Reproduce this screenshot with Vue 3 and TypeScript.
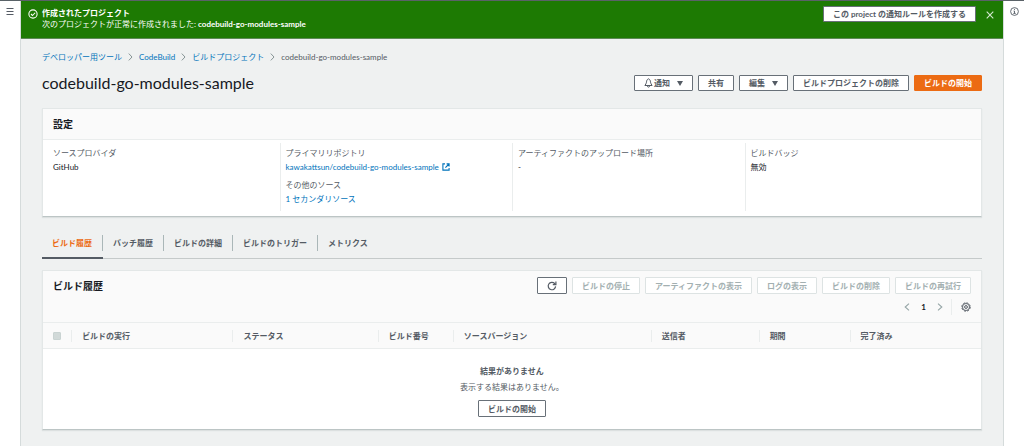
<script setup lang="ts">
import { ref } from 'vue'

interface Column {
  key: string
  label: string
}

const projectName = 'codebuild-go-modules-sample'
const bannerOpen = ref(true)
const activeTab = ref(0)

const crumbs: string[] = ['デベロッパー用ツール', 'CodeBuild', 'ビルドプロジェクト']
const tabs: string[] = ['ビルド履歴', 'バッチ履歴', 'ビルドの詳細', 'ビルドのトリガー', 'メトリクス']
const buildActions: string[] = [
  'ビルドの停止',
  'アーティファクトの表示',
  'ログの表示',
  'ビルドの削除',
  'ビルドの再試行',
]
const columns: Column[] = [
  { key: 'run', label: 'ビルドの実行' },
  { key: 'status', label: 'ステータス' },
  { key: 'number', label: 'ビルド番号' },
  { key: 'source', label: 'ソースバージョン' },
  { key: 'sender', label: '送信者' },
  { key: 'duration', label: '期間' },
  { key: 'done', label: '完了済み' },
]
</script>

<template>
  <div class="shell">
    <aside class="rail">
      <button class="icon-btn" type="button" aria-label="メニュー">
        <svg width="8" height="8" viewBox="0 0 8 8" stroke="#545b64" stroke-width="1">
          <path d="M0.5 1.5h7M0.5 4.5h7M0.5 7.5h7" />
        </svg>
      </button>
    </aside>

    <main class="main">
      <section v-if="bannerOpen" class="banner">
        <svg class="banner-icon" width="10" height="10" viewBox="0 0 16 16" fill="none" stroke="#fff" stroke-width="1.7">
          <circle cx="8" cy="8" r="6.6" />
          <path d="M4.8 8l2.4 2.4 4.2-4.4" />
        </svg>
        <div class="banner-text">
          <strong>作成されたプロジェクト</strong>
          <span>次のプロジェクトが正常に作成されました: <span class="semi">{{ projectName }}</span></span>
        </div>
        <button class="btn banner-btn" type="button">この project の通知ルールを作成する</button>
        <button class="icon-btn" type="button" aria-label="閉じる" @click="bannerOpen = false">
          <svg width="8" height="8" viewBox="0 0 8 8" stroke="#d5e8d0" stroke-width="1.1">
            <path d="M0.7 0.7l6.6 6.6M7.3 0.7l-6.6 6.6" />
          </svg>
        </button>
      </section>

      <div class="content">
        <nav class="crumbs">
          <template v-for="crumb in crumbs" :key="crumb">
            <a href="#">{{ crumb }}</a>
            <svg width="5" height="8" viewBox="0 0 5 8" fill="none" stroke="#879596" stroke-width="1">
              <path d="M0.8 0.6l3.2 3.4-3.2 3.4" />
            </svg>
          </template>
          <span>{{ projectName }}</span>
        </nav>

        <header class="title-row">
          <h1>{{ projectName }}</h1>
          <div class="actions">
            <button class="btn" type="button">
              <svg class="bell" width="9" height="10" viewBox="0 0 9 10" fill="none" stroke="#545b64" stroke-width="1">
                <path d="M4.5 0.8C2.9 1.5 2.6 2.7 2.5 4.2 2.4 5.5 1.6 6.2 0.9 7.5h7.2C7.4 6.2 6.6 5.5 6.5 4.2 6.4 2.7 6.1 1.5 4.5 0.8z" />
                <path d="M3.3 7.7c0.1 1.9 2.3 1.9 2.4 0" />
              </svg>
              <span>通知</span>
              <svg class="caret" width="6" height="5" viewBox="0 0 6 5" fill="#545b64"><path d="M0 0h6L3 5z" /></svg>
            </button>
            <button class="btn" type="button">共有</button>
            <button class="btn" type="button">
              <span>編集</span>
              <svg class="caret" width="6" height="5" viewBox="0 0 6 5" fill="#545b64"><path d="M0 0h6L3 5z" /></svg>
            </button>
            <button class="btn" type="button">ビルドプロジェクトの削除</button>
            <button class="btn primary" type="button">ビルドの開始</button>
          </div>
        </header>

        <section class="card">
          <h2 class="card-title">設定</h2>
          <div class="settings">
            <dl>
              <dt>ソースプロバイダ</dt>
              <dd>GitHub</dd>
            </dl>
            <dl>
              <dt>プライマリリポジトリ</dt>
              <dd>
                <a href="#">kawakattsun/codebuild-go-modules-sample
                  <svg class="external" width="8" height="8" viewBox="0 0 8 8" fill="none" stroke="#0073bb" stroke-width="1.1">
                    <path d="M3 0.9H0.9v6.2h6.2V5M4.6 0.9h2.5v2.5M7 1L3.4 4.6" />
                  </svg></a>
              </dd>
              <dt>その他のソース</dt>
              <dd><a href="#">1 セカンダリソース</a></dd>
            </dl>
            <dl>
              <dt>アーティファクトのアップロード場所</dt>
              <dd>-</dd>
            </dl>
            <dl>
              <dt>ビルドバッジ</dt>
              <dd>無効</dd>
            </dl>
          </div>
        </section>

        <div class="tabs" role="tablist">
          <button
            v-for="(tab, i) in tabs"
            :key="tab"
            type="button"
            role="tab"
            class="tab"
            :class="{ active: activeTab === i }"
            :aria-selected="activeTab === i"
            @click="activeTab = i"
          >
            <span>{{ tab }}</span>
          </button>
        </div>

        <section class="card">
          <div class="history-head">
            <div class="history-top">
              <h2>ビルド履歴</h2>
              <div class="actions">
                <button class="btn tall" type="button" aria-label="更新">
                  <svg width="10" height="10" viewBox="0 0 10 10" fill="none" stroke="#545b64" stroke-width="1.2">
                    <path d="M8.6 5.4A3.7 3.7 0 1 1 7.6 2.5L8.8 3.6" />
                    <path d="M8.9 0.6v3.1H5.8" />
                  </svg>
                </button>
                <button v-for="action in buildActions" :key="action" class="btn tall" type="button" disabled>
                  {{ action }}
                </button>
              </div>
            </div>
            <div class="tools">
              <div class="pager">
                <button class="icon-btn" type="button" aria-label="前へ">
                  <svg width="6" height="8" viewBox="0 0 6 8" fill="none" stroke="#95a5a6" stroke-width="1.1"><path d="M5 0.6L1.2 4 5 7.4" /></svg>
                </button>
                <strong>1</strong>
                <button class="icon-btn" type="button" aria-label="次へ">
                  <svg width="6" height="8" viewBox="0 0 6 8" fill="none" stroke="#95a5a6" stroke-width="1.1"><path d="M1 0.6L4.8 4 1 7.4" /></svg>
                </button>
              </div>
              <button class="icon-btn gear" type="button" aria-label="設定">
                <svg width="10" height="10" viewBox="0 0 10 10" fill="none" stroke="#545b64">
                  <circle cx="5" cy="5" r="4.2" stroke-width="1" stroke-dasharray="2 1.3" />
                  <circle cx="5" cy="5" r="3.5" stroke-width="0.9" />
                  <circle cx="5" cy="5" r="1.4" stroke-width="1" />
                </svg>
              </button>
            </div>
          </div>
          <table>
            <colgroup>
              <col class="c-check" />
              <col v-for="col in columns" :key="col.key" :class="'c-' + col.key" />
            </colgroup>
            <thead>
              <tr>
                <th><input type="checkbox" aria-label="すべて選択" disabled /></th>
                <th v-for="col in columns" :key="col.key"><span>{{ col.label }}</span></th>
              </tr>
            </thead>
            <tbody>
              <tr>
                <td colspan="8">
                  <div class="empty">
                    <strong>結果がありません</strong>
                    <span>表示する結果はありません。</span>
                    <button class="btn tall" type="button">ビルドの開始</button>
                  </div>
                </td>
              </tr>
            </tbody>
          </table>
        </section>
      </div>
    </main>

    <aside class="rail">
      <button class="icon-btn" type="button" aria-label="情報">
        <svg width="9" height="9" viewBox="0 0 9 9" fill="none" stroke="#545b64" stroke-width="0.9">
          <circle cx="4.5" cy="4.5" r="3.9" />
          <path d="M4.5 1.9v1M3.6 4h0.9v2.4M3.3 6.4h2.4" />
        </svg>
      </button>
    </aside>
  </div>
</template>

<style>
body {
  background: #fff;
}
</style>

<style scoped>
.shell {
  display: flex;
  min-height: 100vh;
  box-sizing: border-box;
  border-top: 1px solid #5a6268;
  font-family: Lato, "Liberation Sans", "Noto Sans CJK JP", sans-serif;
  font-size: 8px;
  line-height: 12px;
  color: #16191f;
}
.shell * {
  box-sizing: border-box;
}
button {
  font: inherit;
  cursor: pointer;
}
a {
  color: #0073bb;
  text-decoration: none;
}
h1,
h2,
dl,
dd {
  margin: 0;
}
.rail {
  display: flex;
  flex-shrink: 0;
  justify-content: center;
  align-items: flex-start;
  width: 20px;
  padding-top: 6px;
  background: #fff;
}
.icon-btn {
  display: flex;
  flex-shrink: 0;
  padding: 0;
  border: 0;
  background: none;
}
.main {
  flex: 1;
  min-width: 0;
  background: #eff1f1;
  border-left: 1px solid #d5dbdb;
  border-right: 1px solid #d5dbdb;
}
.banner {
  display: flex;
  align-items: flex-start;
  min-height: 38px;
  padding: 5px 9px 7px 7px;
  background: #1d7a03;
  border-bottom: 1px solid #5d8a56;
  color: #fff;
}
.banner > .icon-btn {
  margin: 5px 0 0 10px;
}
.banner-icon {
  margin: 3px 4px 0 0;
}
.banner-text {
  display: flex;
  flex: 1;
  flex-direction: column;
  line-height: 11px;
  padding-top: 2px;
}
.semi {
  font-weight: 700;
}
.content {
  padding: 12px 21px 16px;
}
.crumbs {
  display: flex;
  align-items: center;
  gap: 6px;
  color: #545b64;
}
.title-row {
  display: flex;
  align-items: center;
  justify-content: space-between;
  margin-top: 9px;
}
h1 {
  font-size: 16px;
  line-height: 22px;
  font-weight: 400;
}
.actions {
  display: flex;
  gap: 5px;
}
.btn {
  display: inline-flex;
  align-items: center;
  justify-content: center;
  height: 16px;
  padding: 0 9px;
  border: 1px solid #687078;
  border-radius: 1px;
  background: #fff;
  color: #545b64;
  font-weight: 700;
  line-height: 12px;
  white-space: nowrap;
}
.btn .bell {
  margin-right: 1px;
}
.btn .caret {
  margin-left: 7px;
}
.btn.tall {
  height: 17px;
}
.btn.primary {
  border-color: #ec6b13;
  background: #ec6b13;
  color: #fff;
}
.btn:disabled {
  border-color: #dde3e3;
  color: #a3b0b1;
  cursor: default;
}
.card {
  border: 1px solid #e3e7e7;
  border-bottom-color: #bcc5c5;
  background: #fff;
  box-shadow: 0 1px 1px #dce0e0;
}
.title-row + .card {
  margin-top: 14px;
}
h2 {
  font-size: 10px;
  line-height: 14px;
  font-weight: 700;
}
.card-title {
  padding: 8px 10px;
  background: #fafafa;
  border-bottom: 1px solid #eaeded;
}
.settings {
  display: grid;
  grid-template-columns: repeat(4, 1fr);
  padding: 3px 4px 5px;
}
dl {
  padding: 4px 0 5px 6px;
}
dl + dl {
  padding-left: 5px;
  border-left: 1px solid #eaeded;
}
dt {
  color: #545b64;
  line-height: 13px;
}
dd {
  line-height: 14px;
}
dd + dt {
  margin-top: 5px;
}
.external {
  margin-left: 1px;
  vertical-align: -1px;
}
.tabs {
  display: flex;
  margin-top: 16px;
  border-bottom: 1px solid #c5caca;
}
.tab {
  margin-bottom: -1px;
  padding: 2px 0 6px;
  border: 0;
  border-bottom: 2px solid transparent;
  background: none;
  color: #545b64;
  font-weight: 700;
}
.tab span {
  display: block;
  padding: 2px 10px;
  border-right: 1px solid #aab7b8;
}
.tab:last-child span {
  border-right: 0;
}
.tab.active {
  border-bottom-color: #545b64;
  color: #ec6b13;
}
.tabs + .card {
  margin-top: 11px;
}
.history-head {
  padding: 6px 10px 7px;
  background: #fafafa;
}
.history-top {
  display: flex;
  align-items: center;
  justify-content: space-between;
}
.tools {
  display: flex;
  align-items: center;
  justify-content: flex-end;
  gap: 8px;
  margin-top: 5px;
  height: 16px;
}
.pager {
  display: flex;
  align-items: center;
  gap: 11px;
}
.gear {
  padding: 3px 0 3px 9px;
  border-left: 1px solid #eaeded;
}
table {
  width: 100%;
  table-layout: fixed;
  border-collapse: collapse;
}
.c-check { width: 3%; }
.c-run { width: 17.2%; }
.c-status { width: 15.5%; }
.c-number { width: 8%; }
.c-source { width: 21.1%; }
.c-sender { width: 11.5%; }
.c-duration { width: 9.7%; }
th {
  height: 26px;
  padding: 0;
  border-top: 1px solid #eaeded;
  border-bottom: 1px solid #eaeded;
  background: #fafafa;
  color: #545b64;
  text-align: left;
  white-space: nowrap;
}
th span {
  display: block;
  padding-left: 10px;
  border-left: 1px solid #eaeded;
}
input[type="checkbox"] {
  display: block;
  width: 8px;
  height: 8px;
  margin: 0 0 0 10px;
  appearance: none;
  border: 1px solid #c9d3d2;
  border-radius: 1px;
  background: #d1d9d8;
}
td {
  padding: 0;
}
.empty {
  display: flex;
  flex-direction: column;
  align-items: center;
  padding: 16px 0 12px;
  color: #545b64;
}
.empty span {
  margin: 4px 0 7px;
}
</style>
